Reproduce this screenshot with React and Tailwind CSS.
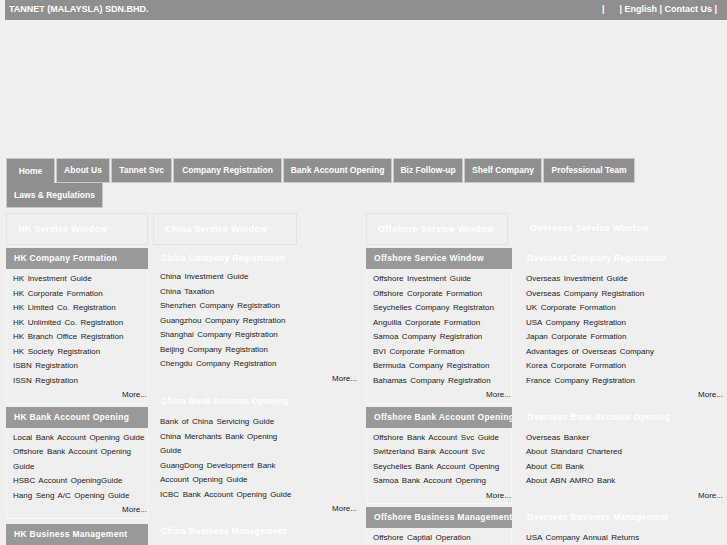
import React from 'react'

const nav = [
  { label: 'Home', w: 'w-[49px]' },
  { label: 'About Us', w: 'w-[54px]' },
  { label: 'Tannet Svc', w: 'w-[61px]' },
  { label: 'Company Registration', w: 'w-[109px]' },
  { label: 'Bank Account Opening', w: 'w-[109px]' },
  { label: 'Biz Follow-up', w: 'w-[70px]' },
  { label: 'Shelf Company', w: 'w-[78px]' },
  { label: 'Professional Team', w: 'w-[92px]' },
]

function Items({ items, more, wrapW, morePr }) {
  return (
    <>
      <ul className={wrapW}>
        {items.map((t, i) => (
          <li key={i} className="leading-[14.5px]">{t}</li>
        ))}
      </ul>
      {more && <div className={`text-right leading-[14.5px] ${morePr}`}>More...</div>}
    </>
  )
}

// gray header + bordered list (columns 1 and 3)
function BoxSection({ title, items, more = true, mb = 'mb-[3px]' }) {
  return (
    <div className={mb}>
      <div className="h-[21px] bg-[#999999] text-white font-bold text-[8.5px] tracking-[0.3px] [word-spacing:0px] leading-[21px] pl-[8px] whitespace-nowrap overflow-hidden">
        {title}
      </div>
      <div className="border-x border-b border-[#f7f7f7] pl-[6px] pt-[3px]">
        <Items items={items} more={more} wrapW="" morePr="" />
      </div>
    </div>
  )
}

// white header, no box (columns 2 and 4)
function PlainSection({ title, items, more = true, pt = 'pt-[3px]', mb = 'mb-[5px]', wrapW, morePr }) {
  return (
    <div className={mb}>
      <div className="h-[21px] text-white font-bold text-[8.5px] tracking-[0.3px] [word-spacing:0px] leading-[21px] pl-[8px] whitespace-nowrap">
        {title}
      </div>
      <div className={`pl-[7px] ${pt}`}>
        <Items items={items} more={more} wrapW={wrapW} morePr={morePr} />
      </div>
    </div>
  )
}

function WindowBox({ title, w, boxed = true }) {
  return (
    <div
      className={`${w} h-[32px] ${boxed ? 'border border-[#e3e3e3]' : ''} text-white font-bold text-[9px] tracking-[0.3px] [word-spacing:0px] leading-[30px] pl-[11px] whitespace-nowrap`}
    >
      {title}
    </div>
  )
}

export default function App() {
  return (
    <div
      className="w-[727px] h-[545px] overflow-hidden bg-[#efefef] text-[#222] text-[8px] [word-spacing:1.3px]"
      style={{ fontFamily: '"Liberation Sans", Arial, sans-serif' }}
    >
      {/* top bar */}
      <div className="ml-[5px] h-[21px] bg-[#8f8f8f] border-b border-[#f6f6f6] flex items-center justify-between pl-[4px] pr-[10px] text-white font-bold text-[9px] [word-spacing:0px]">
        <span>TANNET (MALAYSLA) SDN.BHD.</span>
        <span className="whitespace-pre">|      | English | Contact Us |</span>
      </div>

      {/* nav */}
      <div className="mt-[137px] pl-[6px]">
        <div className="flex gap-[1px]">
          {nav.map((n) => (
            <div
              key={n.label}
              className={`${n.w} h-[25px] bg-[#8f8f8f] border border-[#c9c9c9] ${n.label === 'Home' ? 'border-b-0' : ''} text-white font-bold text-[8.5px] [word-spacing:0px] flex items-center justify-center whitespace-nowrap`}
            >
              {n.label}
            </div>
          ))}
        </div>
        <div className="w-[97px] h-[25px] bg-[#8f8f8f] border border-t-0 border-[#c9c9c9] text-white font-bold text-[8.5px] [word-spacing:0px] flex items-center justify-center whitespace-nowrap">
          Laws &amp; Regulations
        </div>
      </div>

      {/* windows */}
      <div className="mt-[5px] pl-[6px] flex">
        <WindowBox title="HK Service Window" w="w-[142px]" />
        <div className="w-[5px]" />
        <WindowBox title="China Service Window" w="w-[144px]" />
        <div className="w-[69px]" />
        <WindowBox title="Offshore Service Window" w="w-[142px]" />
        <div className="w-[11px]" />
        <WindowBox title="Overseas Service Window" w="w-[190px]" boxed={false} />
      </div>

      {/* columns */}
      <div className="mt-[3px] pl-[6px] flex items-start">
        <div className="w-[142px] shrink-0">
          <BoxSection
            title="HK Company Formation"
            items={[
              'HK Investment Guide',
              'HK Corporate Formation',
              'HK Limited Co. Registration',
              'HK Unlimited Co. Registration',
              'HK Branch Office Registration',
              'HK Society Registration',
              'ISBN Registration',
              'ISSN Registration',
            ]}
          />
          <BoxSection
            title="HK Bank Account Opening"
            items={[
              'Local Bank Account Opening Guide',
              'Offshore Bank Account Opening Guide',
              'HSBC Account OpeningGuide',
              'Hang Seng A/C Opening Guide',
            ]}
            mb="mb-[5px]"
          />
          <BoxSection title="HK Business Management" items={['HK Company Secretary']} />
        </div>

        <div className="w-[207px] shrink-0 ml-[5px]">
          <PlainSection
            title="China Company Registration"
            pt="pt-[1px]"
            wrapW="w-[136px]"
            morePr="pr-[3px]"
            items={[
              'China Investment Guide',
              'China Taxation',
              'Shenzhen Company Registration',
              'Guangzhou Company Registration',
              'Shanghai Company Registration',
              'Beijing Company Registration',
              'Chengdu Company Registration',
            ]}
          />
          <PlainSection
            title="China Bank Account Opening"
            wrapW="w-[136px]"
            morePr="pr-[3px]"
            mb="mb-[4px]"
            items={[
              'Bank of China Servicing Guide',
              'China Merchants Bank Opening Guide',
              'GuangDong Development Bank Account Opening Guide',
              'ICBC Bank Account Opening Guide',
            ]}
          />
          <PlainSection title="China Business Management" wrapW="w-[136px]" items={['China Accounting Service']} more={false} />
        </div>

        <div className="w-[146px] shrink-0 ml-[6px]">
          <BoxSection
            title="Offshore Service Window"
            items={[
              'Offshore Investment Guide',
              'Offshore Corporate Formation',
              'Seychelles Company Registraton',
              'Anguilla Corporate Formation',
              'Samoa Company Registration',
              'BVI Corporate Formation',
              'Bermuda Company Registration',
              'Bahamas Company Registration',
            ]}
          />
          <BoxSection
            title="Offshore Bank Account Opening"
            items={[
              'Offshore Bank Account Svc Guide',
              'Switzerland Bank Account Svc',
              'Seychelles Bank Account Opening',
              'Samoa Bank Account Opening',
            ]}
          />
          <BoxSection title="Offshore Business Management" items={['Offshore Captial Operation', 'Offshore Accounting']} />
        </div>

        <div className="w-[207px] shrink-0 ml-[7px]">
          <PlainSection
            title="Overseas Company Registration"
            wrapW="w-[190px]"
            morePr="pr-[3px]"
            mb="mb-[4px]"
            items={[
              'Overseas Investment Guide',
              'Overseas Company Registration',
              'UK Corporate Formation',
              'USA Company Registration',
              'Japan Corporate Formation',
              'Advantages of Overseas Company',
              'Korea Corporate Formation',
              'France Company Registration',
            ]}
          />
          <PlainSection
            title="Overseas Bank Account Opening"
            wrapW="w-[190px]"
            morePr="pr-[3px]"
            pt="pt-[3px]"
            mb="mb-[4px]"
            items={['Overseas Banker', 'About Standard Chartered', 'About Citi Bank', 'About ABN AMRO Bank']}
          />
          <PlainSection title="Overseas Business Management" wrapW="w-[190px]" items={['USA Company Annual Returns', 'UK Company Annual Returns']} more={false} />
        </div>
      </div>
    </div>
  )
}
